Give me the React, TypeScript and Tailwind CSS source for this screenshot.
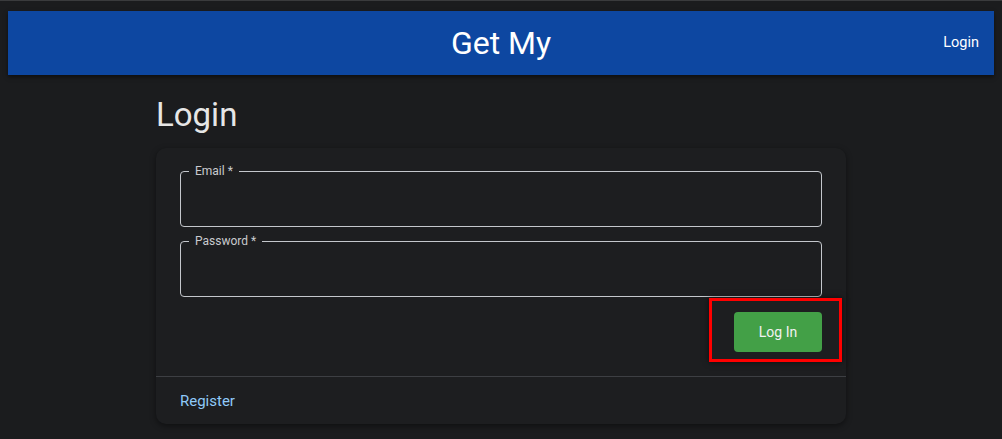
import React from "react";

function OutlinedField({ label }: { label: string }) {
  return (
    <div className="relative h-[56px] w-full">
      <fieldset className="absolute bottom-0 left-0 right-0 top-[-6px] m-0 rounded-[4px] border border-[#c4c7cc] px-[8px] pb-0 pt-0">
        <legend className="px-[6px] text-[12px] leading-[12px] text-[#c9cbcf]">{label}</legend>
      </fieldset>
      <input
        className="absolute inset-0 h-full w-full bg-transparent px-[14px] text-[16px] text-[#e3e3e3] outline-none"
        aria-label={label}
      />
    </div>
  );
}

export default function App() {
  return (
    <div
      className="min-h-screen w-full border-t border-[#3a3b3d] bg-[#1b1c1e] px-[8px] pt-[10px]"
      style={{ fontFamily: "Roboto, 'Liberation Sans', sans-serif" }}
    >
      <header className="relative flex h-[64px] items-center justify-center bg-[#0d47a1] shadow-[0_2px_4px_rgba(0,0,0,0.5)]">
        <h1 className="text-[32px] font-normal leading-none text-white">Get My</h1>
        <a className="absolute right-[15px] top-1/2 -translate-y-1/2 text-[14.5px] text-white">Login</a>
      </header>

      <main className="mx-auto w-[690px] pt-[19px]">
        <h2 className="text-[33px] font-normal leading-[42px] text-[#e6e6e6]">Login</h2>

        <div className="mt-[12px] rounded-[10px] bg-[#1d1e20] shadow-[0_2px_6px_rgba(0,0,0,0.45)]">
          <div className="flex flex-col gap-[14px] px-[24px] pt-[23px]">
            <OutlinedField label="Email *" />
            <OutlinedField label="Password *" />
          </div>
          <div className="flex justify-end px-[24px] pb-[24px] pt-[15px]">
            <div className="relative">
              <button className="h-[40px] w-[88px] rounded-[4px] bg-[#43a047] text-[14px] text-[#f2f2f2]">
                Log In
              </button>
              <div className="pointer-events-none absolute bottom-[-10px] left-[-25px] right-[-20px] top-[-14px] border-[3px] border-[#ff0000] shadow-[0_0_6px_rgba(0,0,0,0.6)]" />
            </div>
          </div>
          <div className="h-px bg-[#3d3f43]" />
          <div className="px-[24px] pb-[14px] pt-[15px]">
            <a className="block text-[15px] leading-[18px] text-[#90caf9]">Register</a>
          </div>
        </div>
      </main>
    </div>
  );
}
